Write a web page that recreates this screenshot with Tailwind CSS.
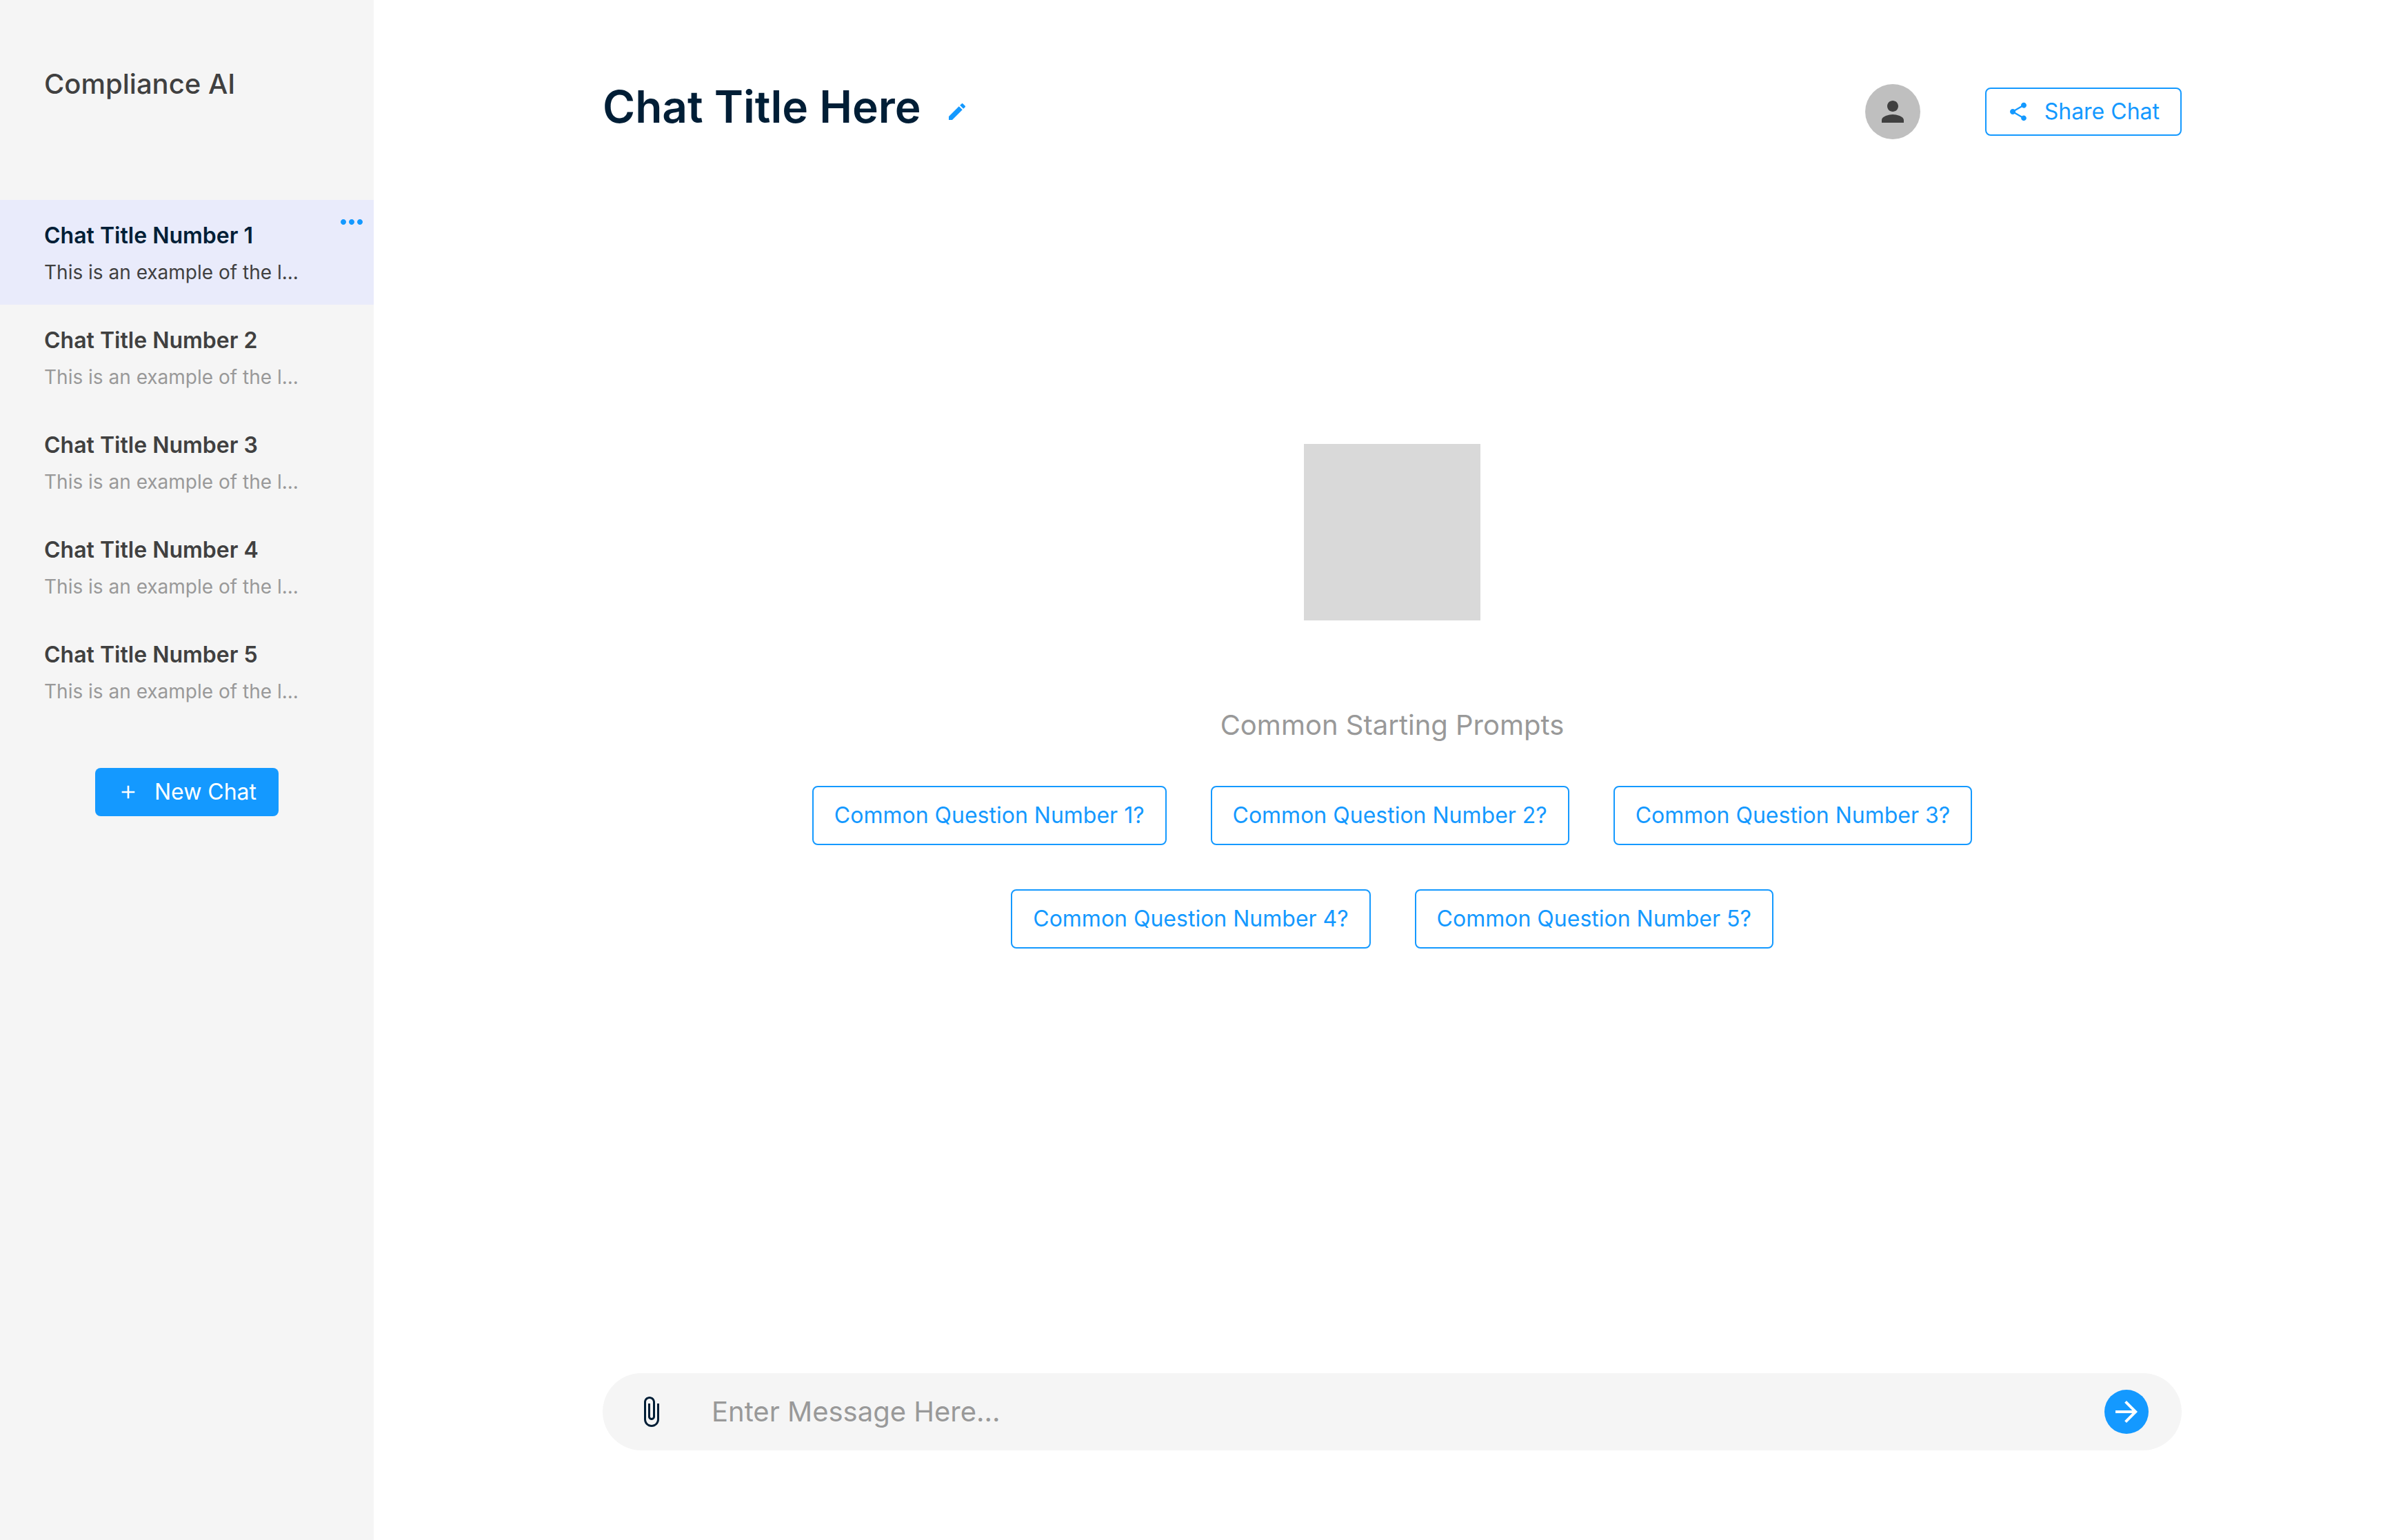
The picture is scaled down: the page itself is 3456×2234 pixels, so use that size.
<!DOCTYPE html>
<html lang="en">
<head>
<meta charset="utf-8">
<meta name="viewport" content="width=device-width, initial-scale=1">
<title>Compliance AI</title>
<script src="https://cdn.jsdelivr.net/npm/@tailwindcss/browser@4"></script>
</head>
<body class="flex min-h-screen bg-white font-['Inter',sans-serif] text-[#404040]">
  <aside class="flex w-[542px] shrink-0 flex-col bg-[#f5f5f5]">
    <div class="px-16 pt-[98px] pb-36 text-[40px] leading-[48px] font-medium">Compliance AI</div>
    <nav aria-label="Chats">
      <ul>
        <li class="relative bg-[#e9ebfb]">
          <a href="#" aria-current="page" class="flex flex-col gap-4 px-16 pt-8 pb-[30px]">
            <span class="text-[32px] leading-[40px] font-semibold text-[#001e36]">Chat Title Number 1</span>
            <span class="text-[28px] leading-[34px]">This is an example of the l...</span>
          </a>
          <button type="button" aria-label="Chat options" class="absolute top-2 right-2 text-[#1499ff]">
            <svg class="size-12" viewBox="0 0 24 24" fill="currentColor"><path d="M6 10c-1.1 0-2 .9-2 2s.9 2 2 2 2-.9 2-2-.9-2-2-2zm12 0c-1.1 0-2 .9-2 2s.9 2 2 2 2-.9 2-2-.9-2-2-2zm-6 0c-1.1 0-2 .9-2 2s.9 2 2 2 2-.9 2-2-.9-2-2-2z"/></svg>
          </button>
        </li>
        <li>
          <a href="#" class="flex flex-col gap-4 px-16 pt-8 pb-[30px]">
            <span class="text-[32px] leading-[40px] font-semibold">Chat Title Number 2</span>
            <span class="text-[28px] leading-[34px] text-[#999999]">This is an example of the l...</span>
          </a>
        </li>
        <li>
          <a href="#" class="flex flex-col gap-4 px-16 pt-8 pb-[30px]">
            <span class="text-[32px] leading-[40px] font-semibold">Chat Title Number 3</span>
            <span class="text-[28px] leading-[34px] text-[#999999]">This is an example of the l...</span>
          </a>
        </li>
        <li>
          <a href="#" class="flex flex-col gap-4 px-16 pt-8 pb-[30px]">
            <span class="text-[32px] leading-[40px] font-semibold">Chat Title Number 4</span>
            <span class="text-[28px] leading-[34px] text-[#999999]">This is an example of the l...</span>
          </a>
        </li>
        <li>
          <a href="#" class="flex flex-col gap-4 px-16 pt-8 pb-[30px]">
            <span class="text-[32px] leading-[40px] font-semibold">Chat Title Number 5</span>
            <span class="text-[28px] leading-[34px] text-[#999999]">This is an example of the l...</span>
          </a>
        </li>
      </ul>
    </nav>
    <button type="button" class="mt-16 flex h-[70px] items-center gap-[22px] self-center rounded-lg bg-[#1499ff] px-8 text-[32px] leading-[40px] text-white">
      <svg class="size-8" viewBox="0 0 24 24" fill="currentColor"><path d="M19 13h-6v6h-2v-6H5v-2h6V5h2v6h6v2z"/></svg>
      New Chat
    </button>
  </aside>

  <main class="flex flex-1 flex-col pt-[116px] pr-[292px] pb-[130px] pl-[332px]">
    <header class="flex items-center">
      <h1 class="pb-3.5 text-[64px] leading-[78px] font-semibold text-[#001e36]">Chat Title Here</h1>
      <button type="button" aria-label="Rename chat" class="ml-9 text-[#1499ff]">
        <svg class="size-8" viewBox="0 0 24 24" fill="currentColor"><path d="M3 17.25V21h3.75L17.81 9.94l-3.75-3.75L3 17.25zM20.71 7.04c.39-.39.39-1.02 0-1.41l-2.34-2.34c-.39-.39-1.02-.39-1.41 0l-1.83 1.83 3.75 3.75 1.83-1.83z"/></svg>
      </button>
      <button type="button" aria-label="Account" class="ml-auto flex size-20 items-center justify-center rounded-full bg-[#bfbfbf]">
        <svg class="size-12" viewBox="0 0 24 24" fill="currentColor"><path d="M12 12c2.21 0 4-1.79 4-4s-1.79-4-4-4-4 1.79-4 4 1.79 4 4 4zm0 2c-2.67 0-8 1.34-8 4v2h16v-2c0-2.66-5.33-4-8-4z"/></svg>
      </button>
      <button type="button" class="ml-[94px] flex h-[70px] items-center gap-[22px] rounded-lg border-2 border-[#1499ff] px-[30px] text-[32px] leading-[40px] text-[#1499ff]">
        <svg class="size-8" viewBox="0 0 24 24" fill="currentColor"><path d="M18 16.08c-.76 0-1.44.3-1.96.77L8.91 12.7c.05-.23.09-.46.09-.7s-.04-.47-.09-.7l7.05-4.11c.54.5 1.25.81 2.04.81 1.66 0 3-1.34 3-3s-1.34-3-3-3-3 1.34-3 3c0 .24.04.47.09.7L8.04 9.81C7.5 9.31 6.79 9 6 9c-1.66 0-3 1.34-3 3s1.34 3 3 3c.79 0 1.5-.31 2.04-.81l7.12 4.16c-.05.21-.08.43-.08.65 0 1.61 1.31 2.92 2.92 2.92 1.61 0 2.92-1.31 2.92-2.92s-1.31-2.92-2.92-2.92z"/></svg>
        Share Chat
      </button>
    </header>

    <section class="flex flex-1 flex-col items-center pt-[436px]">
      <div class="size-64 bg-[#d9d9d9]"></div>
      <h2 class="mt-32 text-[40px] leading-[48px] text-[#999999]">Common Starting Prompts</h2>
      <div class="mt-16 flex max-w-[1800px] flex-wrap justify-center gap-16 text-[32px] leading-[40px] text-[#1499ff]">
        <button type="button" class="h-[86px] rounded-lg border-2 border-[#1499ff] px-[30px]">Common Question Number 1?</button>
        <button type="button" class="h-[86px] rounded-lg border-2 border-[#1499ff] px-[30px]">Common Question Number 2?</button>
        <button type="button" class="h-[86px] rounded-lg border-2 border-[#1499ff] px-[30px]">Common Question Number 3?</button>
        <button type="button" class="h-[86px] rounded-lg border-2 border-[#1499ff] px-[30px]">Common Question Number 4?</button>
        <button type="button" class="h-[86px] rounded-lg border-2 border-[#1499ff] px-[30px]">Common Question Number 5?</button>
      </div>
    </section>

    <form class="flex h-28 items-center rounded-full bg-[#f5f5f5] pr-12 pl-[46px]">
      <button type="button" aria-label="Attach file" class="text-[#001e36]">
        <svg class="size-12" viewBox="0 0 24 24" fill="currentColor"><path d="M16.5 6v11.5c0 2.21-1.79 4-4 4s-4-1.79-4-4V5c0-1.38 1.12-2.5 2.5-2.5s2.5 1.12 2.5 2.5v10.5c0 .55-.45 1-1 1s-1-.45-1-1V6H10v9.5c0 1.38 1.12 2.5 2.5 2.5s2.5-1.12 2.5-2.5V5c0-2.21-1.79-4-4-4S7 2.79 7 5v12.5c0 3.04 2.46 5.5 5.5 5.5s5.5-2.46 5.5-5.5V6h-1.5z"/></svg>
      </button>
      <input type="text" aria-label="Message" placeholder="Enter Message Here..." class="ml-16 h-12 flex-1 text-[40px] leading-[48px] outline-none placeholder:text-[#999999]">
      <button type="submit" aria-label="Send" class="flex size-16 items-center justify-center rounded-full bg-[#1499ff] text-white">
        <svg class="size-12" viewBox="0 0 24 24" fill="currentColor"><path d="M12 4l-1.41 1.41L16.17 11H4v2h12.17l-5.58 5.59L12 20l8-8z"/></svg>
      </button>
    </form>
  </main>
</body>
</html>
